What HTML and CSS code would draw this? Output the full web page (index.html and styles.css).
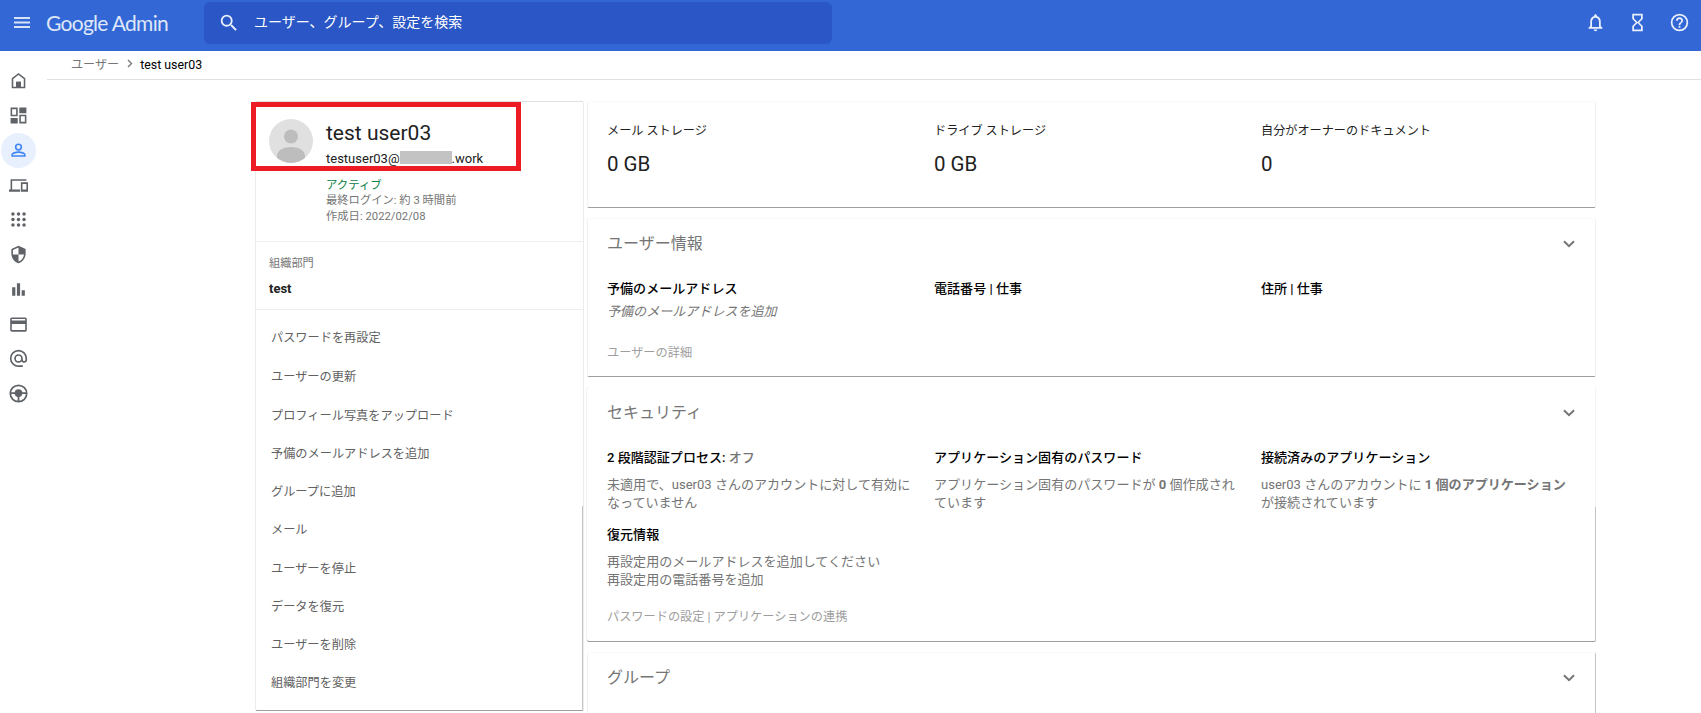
FILE: index.html
```html
<!DOCTYPE html>
<html lang="ja">
<head>
    <meta charset="UTF-8">
    <meta name="viewport" content="width=device-width, initial-scale=1.0">
    <title>Google Admin</title>
    <link rel="stylesheet" href="styles.css">
</head>
<body>

    <header class="topbar">
        <svg class="menu" width="24" height="24" viewBox="0 0 24 24"><path d="M4 7h16M4 11.500h16M4 16h16" fill="none" stroke="#d9e3f8" stroke-width="2"/></svg>
        <div class="logo">Google Admin</div>
        <div class="search">
            <svg width="22" height="22" viewBox="0 0 24 24"><path d="M15.5 14h-.79l-.28-.27A6.47 6.47 0 0 0 16 9.5 6.5 6.5 0 1 0 9.5 16c1.61 0 3.09-.59 4.23-1.57l.27.28v.79l5 4.99L20.49 19l-4.99-5zm-6 0a4.5 4.5 0 1 1 0-9 4.5 4.5 0 0 1 0 9z"/></svg>
            <span>ユーザー、グループ、設定を検索</span>
        </div>
        <div class="actions">
            <svg width="21" height="21" viewBox="0 0 24 24"><path d="M12 22c1.1 0 2-.9 2-2h-4c0 1.1.9 2 2 2zm6-6v-5c0-3.07-1.63-5.64-4.5-6.32V4c0-.83-.67-1.5-1.5-1.5s-1.5.67-1.5 1.5v.68C7.64 5.36 6 7.92 6 11v5l-2 2v1h16v-1l-2-2zm-2 1H8v-6c0-2.48 1.51-4.5 4-4.5s4 2.02 4 4.5v6z"/></svg>
            <svg width="21" height="21" viewBox="0 0 24 24"><path d="M6 2v6h.01L6 8.01 10 12l-4 4 .01.01H6V22h12v-5.99h-.01L18 16l-4-4 4-3.99-.01-.01H18V2H6zm10 14.5V20H8v-3.5l4-4 4 4zm-4-5l-4-4V4h8v3.5l-4 4z"/></svg>
            <svg width="21" height="21" viewBox="0 0 24 24"><path d="M11 18h2v-2h-2v2zm1-16a10 10 0 1 0 0 20 10 10 0 0 0 0-20zm0 18a8 8 0 1 1 0-16 8 8 0 0 1 0 16zm0-14a4 4 0 0 0-4 4h2a2 2 0 1 1 4 0c0 2-3 1.75-3 5h2c0-2.25 3-2.5 3-5a4 4 0 0 0-4-4z"/></svg>
        </div>
    </header>

    <div class="page">
        <nav class="sidebar">
            <a><svg viewBox="0 0 24 24"><path d="M3.5 9.2L12 2.8l8.5 6.4V22h-17z" fill="none" stroke="#5f6368" stroke-width="2.2"/><path d="M8.5 13.5h7V22h-7z"/></svg></a>
            <a><svg viewBox="0 0 24 24"><path d="M2 2v11h9V2H2zm7 9H4V4h5v7zM13 2v7h9V2h-9zM2 15v7h9v-7H2zM13 11v11h9V11h-9zm7 9h-5v-7h5v7z"/></svg></a>
            <a class="active"><svg viewBox="0 0 24 24"><path d="M12 5a2.6 2.6 0 1 1 0 5.2 2.6 2.6 0 0 1 0-5.2m0 10c3.3 0 7 1.5 7 2.3V18H5v-.7c0-.8 3.7-2.3 7-2.3M12 3a4.6 4.6 0 1 0 0 9.2A4.6 4.6 0 0 0 12 3zm0 10c-3 0-9 1.4-9 4.3V20h18v-2.7c0-2.9-6-4.3-9-4.3z"/></svg></a>
            <a><svg viewBox="0 0 24 24"><path d="M4 6h18V4H2v13H0v3h14v-3H4V6zm20 2h-9v12h9V8zm-2 9h-5v-7h5v7z"/></svg></a>
            <a><svg viewBox="0 0 24 24"><circle cx="5" cy="5" r="2.2"/><circle cx="12" cy="5" r="2.2"/><circle cx="19" cy="5" r="2.2"/><circle cx="5" cy="12" r="2.2"/><circle cx="12" cy="12" r="2.2"/><circle cx="19" cy="12" r="2.2"/><circle cx="5" cy="19" r="2.2"/><circle cx="12" cy="19" r="2.2"/><circle cx="19" cy="19" r="2.2"/></svg></a>
            <a><svg viewBox="0 0 24 24"><path d="M12 1L3 5v6c0 5.55 3.84 10.74 9 12 5.16-1.26 9-6.45 9-12V5l-9-4zm0 10.99h7c-.53 4.12-3.28 7.79-7 8.94V12H5V6.3l7-3.11v8.8z"/></svg></a>
            <a><svg viewBox="0 0 24 24"><path d="M4 9h4v11H4zM10 4h4v16h-4zM16 13h4v7h-4z"/></svg></a>
            <a><svg viewBox="0 0 24 24"><path d="M20.500 3h-17A2 2 0 0 0 1.500 5v14c0 1.110.89 2 2 2h17a2 2 0 0 0 2-2V5a2 2 0 0 0-2-2zm0 16h-17v-7.500h17V19zm0-12h-17V5h17v2z"/></svg></a>
            <a><svg viewBox="1 1 22 22"><path d="M12 1.95a10 10 0 0 0 0 20h5v-2h-5c-4.34 0-8-3.66-8-8s3.66-8 8-8 8 3.66 8 8v1.43c0 .79-.71 1.57-1.5 1.57s-1.5-.78-1.5-1.57v-1.43a5 5 0 1 0-1.46 3.54c.65.89 1.77 1.46 2.96 1.46 1.97 0 3.5-1.6 3.5-3.57v-1.43a10 10 0 0 0-10-10zm0 13a3 3 0 1 1 0-6 3 3 0 0 1 0 6z"/></svg></a>
            <a><svg viewBox="1 1 22 22"><circle cx="12" cy="12" r="9.5" fill="none" stroke="#5f6368" stroke-width="2"/><circle cx="12" cy="11.5" r="4.5"/><path d="M3 10.5h18v2H3zM11 14h2v7h-2z"/></svg></a>
        </nav>

        <main class="content">
            <div class="breadcrumb">
                <span class="parent">ユーザー</span>
                <svg width="6" height="9" viewBox="0 0 6 9"><path d="M1 1l3.5 3.5L1 8" fill="none" stroke="#757575" stroke-width="1.3"/></svg>
                <span class="current">test user03</span>
            </div>

            <div class="columns">
                <aside class="card profile">
                    <div class="identity">
                        <svg class="avatar" width="44" height="44" viewBox="0 0 44 44">
                            <clipPath id="round"><circle cx="22" cy="22" r="22"/></clipPath>
                            <g clip-path="url(#round)">
                                <path d="M0 0h44v44H0z" fill="#e0e0e0"/>
                                <circle cx="22" cy="17.5" r="7" fill="#bdbdbd"/>
                                <path d="M8 37c0-6 7-9 14-9s14 3 14 9v7H8z" fill="#bdbdbd"/>
                            </g>
                        </svg>
                        <div class="details">
                            <div class="name">test user03</div>
                            <div class="email">testuser03@<span class="mask"></span>.work</div>
                            <div class="status">アクティブ</div>
                            <div class="meta">最終ログイン: 約 3 時間前</div>
                            <div class="meta">作成日: 2022/02/08</div>
                        </div>
                        <div class="highlight"></div>
                    </div>
                    <div class="unit">
                        <div class="label">組織部門</div>
                        <div class="value">test</div>
                    </div>
                    <ul class="options">
                        <li>パスワードを再設定</li>
                        <li>ユーザーの更新</li>
                        <li>プロフィール写真をアップロード</li>
                        <li>予備のメールアドレスを追加</li>
                        <li>グループに追加</li>
                        <li>メール</li>
                        <li>ユーザーを停止</li>
                        <li>データを復元</li>
                        <li>ユーザーを削除</li>
                        <li>組織部門を変更</li>
                    </ul>
                </aside>

                <div class="panels">
                    <section class="card storage">
                        <div class="grid">
                            <div><div class="label">メール ストレージ</div><div class="amount">0 GB</div></div>
                            <div><div class="label">ドライブ ストレージ</div><div class="amount">0 GB</div></div>
                            <div><div class="label">自分がオーナーのドキュメント</div><div class="amount">0</div></div>
                        </div>
                    </section>

                    <section class="card info">
                        <div class="title">
                            <h2>ユーザー情報</h2>
                            <svg width="12" height="8" viewBox="0 0 12 8"><path d="M1 1.2l5 5 5-5" fill="none" stroke="#757575" stroke-width="2"/></svg>
                        </div>
                        <div class="grid">
                            <div>
                                <h3>予備のメールアドレス</h3>
                                <p class="empty">予備のメールアドレスを追加</p>
                            </div>
                            <div><h3>電話番号 | 仕事</h3></div>
                            <div><h3>住所 | 仕事</h3></div>
                        </div>
                        <div class="more">ユーザーの詳細</div>
                    </section>

                    <section class="card security">
                        <div class="title">
                            <h2>セキュリティ</h2>
                            <svg width="12" height="8" viewBox="0 0 12 8"><path d="M1 1.2l5 5 5-5" fill="none" stroke="#757575" stroke-width="2"/></svg>
                        </div>
                        <div class="grid">
                            <div>
                                <h3>2 段階認証プロセス: <span class="off">オフ</span></h3>
                                <p>未適用で、user03 さんのアカウントに対して有効に<br>なっていません</p>
                            </div>
                            <div>
                                <h3>アプリケーション固有のパスワード</h3>
                                <p>アプリケーション固有のパスワードが <b>0</b> 個作成され<br>ています</p>
                            </div>
                            <div>
                                <h3>接続済みのアプリケーション</h3>
                                <p>user03 さんのアカウントに <b>1 個のアプリケーション</b><br>が接続されています</p>
                            </div>
                            <div class="recovery">
                                <h3>復元情報</h3>
                                <p>再設定用のメールアドレスを追加してください<br>再設定用の電話番号を追加</p>
                            </div>
                        </div>
                        <div class="more">パスワードの設定 | アプリケーションの連携</div>
                    </section>

                    <section class="card groups">
                        <div class="title">
                            <h2>グループ</h2>
                            <svg width="12" height="8" viewBox="0 0 12 8"><path d="M1 1.2l5 5 5-5" fill="none" stroke="#757575" stroke-width="2"/></svg>
                        </div>
                    </section>
                </div>
            </div>
        </main>
    </div>

</body>
</html>
```
FILE: styles.css
```css
* {
    box-sizing: border-box;
}
body {
    margin: 0;
    background-color: #fff;
    font-family: Roboto, 'Noto Sans CJK JP', sans-serif;
    font-size: 13px;
    color: #212121;
    white-space: nowrap;
}
h2, h3, p, ul {
    margin: 0;
    padding: 0;
}
svg {
    display: block;
    flex-shrink: 0;
}

/* Top bar */
.topbar {
    display: flex;
    height: 51px;
    background-color: #3367d6;
    color: #fff;
}
.menu {
    margin: 11px 0 0 10px;
}
.logo {
    width: 170px;
    padding-left: 12px;
    font-family: Lato, sans-serif;
    font-size: 21px;
    line-height: 46px;
    letter-spacing: -0.7px;
    color: #dfe7f9;
}
.search {
    display: flex;
    align-items: center;
    gap: 14px;
    width: 628px;
    height: 42px;
    margin-top: 2px;
    padding-left: 14px;
    border-radius: 6px;
    background-color: #2a56c6;
    font-size: 14px;
    line-height: 20px;
}
.search span {
    margin-top: -3px;
}
.search svg, .actions svg {
    fill: #e9effb;
}
.actions {
    display: flex;
    gap: 21px;
    margin: 12px 11px 0 auto;
}

/* Side navigation */
.page {
    display: flex;
    height: calc(100vh - 51px);
    overflow: hidden;
}
.sidebar {
    width: 47px;
    padding: 12.5px 0 0 1px;
}
.sidebar a {
    display: flex;
    align-items: center;
    justify-content: center;
    width: 35px;
    height: 34.75px;
    border-radius: 50%;
}
.sidebar svg {
    width: 19px;
    height: 19px;
    fill: #5f6368;
}
.sidebar a:first-child svg {
    width: 17px;
    height: 17px;
}
.sidebar .active {
    background-color: #e8f0fe;
}
.sidebar .active svg {
    fill: #4285f4;
}

.content {
    flex: 1;
}
.breadcrumb {
    display: flex;
    align-items: center;
    height: 29px;
    padding: 0 0 3px 24px;
    border-bottom: 1px solid #e0e0e0;
    color: #000;
}
.breadcrumb .parent {
    font-size: 12.1px;
    color: #757575;
}
.breadcrumb .current {
    margin-top: 2px;
    font-size: 12.4px;
}
.breadcrumb svg {
    margin: 0 7px 0 8px;
}

/* Cards */
.columns {
    display: flex;
    gap: 3px;
    padding: 21px 0 0 208px;
}
.card {
    border: 1px solid #f1f1f1;
    border-top-color: #fafafa;
    border-bottom: 1px solid #9e9e9e;
    border-radius: 2px;
}
.profile {
    width: 329px;
    height: 610px;
    border-color: #e0e0e0 #ececec #9e9e9e;
    /* heavier right edge on the lower part of the card */
    background: linear-gradient(#c4c4c4, #c4c4c4) right bottom / 1px 204px no-repeat;
}
.identity {
    position: relative;
    display: flex;
    gap: 13px;
    height: 140px;
    padding: 17px 0 0 13px;
    border-bottom: 1px solid #eee;
}
.name {
    font-size: 21px;
    line-height: 28px;
}
.email {
    display: flex;
    height: 20px;
    margin-top: 1px;
    line-height: 21px;
}
.mask {
    width: 52px;
    height: 13px;
    margin-top: 3px;
    background-color: #c3c3c3;
}
.status {
    margin-top: 10px;
    font-size: 11.4px;
    line-height: 15px;
    color: #0b8043;
}
.meta {
    font-size: 11.3px;
    line-height: 15.5px;
    color: #757575;
}
.highlight {
    position: absolute;
    left: -5px;
    top: 0;
    width: 270px;
    height: 69px;
    border: 5px solid #ed1c24;
}
.unit {
    height: 68px;
    padding: 13px 0 0 13px;
    border-bottom: 1px solid #eee;
}
.unit .label {
    font-size: 11.2px;
    line-height: 18px;
    color: #757575;
}
.unit .value {
    margin-top: 7px;
    line-height: 18px;
    font-weight: bold;
}
.options {
    padding: 9px 0 0 15px;
    list-style: none;
    font-size: 12.2px;
    line-height: 38.1px;
    color: #616161;
}
.options li:nth-child(-n+2) {
    margin-bottom: 1px;
}

.panels {
    display: flex;
    flex-direction: column;
    gap: 10px;
    width: 1009px;
}
.panels .card {
    padding: 0 20px 0 19px;
}
.grid {
    display: grid;
    grid-template-columns: repeat(3, 327px);
}
.storage {
    height: 107px;
}
.storage .label {
    margin-top: 19px;
    font-size: 12.15px;
    line-height: 20px;
}
.storage .amount {
    margin-top: 11px;
    font-size: 20.5px;
    line-height: 24px;
}
.title {
    display: flex;
    justify-content: space-between;
    align-items: center;
    height: 50px;
}
.title h2 {
    font-size: 16px;
    font-weight: normal;
    line-height: 24px;
    color: #757575;
}
.panels h3 {
    font-size: 13.05px;
    font-weight: 500;
    line-height: 20px;
    color: #000;
}
.panels p {
    font-size: 13.05px;
    line-height: 17.5px;
    color: #757575;
}
.more {
    font-size: 12.2px;
    line-height: 18px;
    color: #9e9e9e;
}
.info {
    height: 159px;
}
.info .grid {
    height: 75px;
    padding-top: 10px;
}
.info .empty {
    margin-top: 4px;
    font-style: italic;
}
.security {
    height: 254px;
    margin-bottom: 1px;
    border-bottom: 0;
    border-image: linear-gradient(#f4f4f4 120px, #c4c4c4 120px) 1;
    border-image-width: 0 1px 0 0;
    box-shadow: 0 1px 0 #9e9e9e, -1px 0 0 #f3f3f3;
}
.security .grid {
    height: 170px;
    padding-top: 10px;
    grid-template-rows: 77px auto;
}
.security p {
    margin-top: 8px;
}
.security .off {
    color: #757575;
}
.groups {
    height: 100px;
    border-right-color: #c4c4c4;
}
```
